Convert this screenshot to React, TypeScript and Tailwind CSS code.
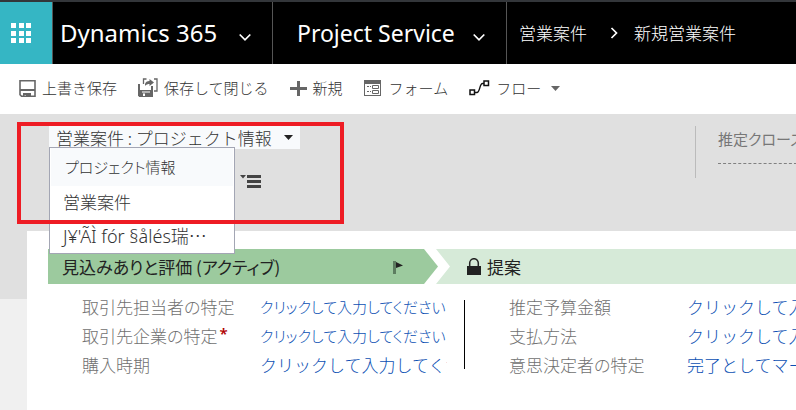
import type { ReactNode } from "react";

const cjk = "font-['Noto_Sans','Noto_Sans_CJK_JP',sans-serif]";
const jp = "font-['Noto_Sans_CJK_JP',sans-serif]";
const proportional = "[font-feature-settings:'palt']";

function Chevron({ right = false }: { right?: boolean }) {
  return (
    <svg width="12" height="12" viewBox="0 0 12 12" fill="none" stroke="white" strokeWidth="1.700" aria-hidden="true">
      <path d={right ? "M3.5 1 8.5 6l-5 5" : "M.7 3.5 6 8.800l5.3-5.3"} />
    </svg>
  );
}

function WaffleIcon() {
  return (
    <svg width="20" height="20" viewBox="0 0 20 20" fill="white" aria-hidden="true">
      {[0, 8, 15].map((y) =>
        [0, 8, 15].map((x) => <rect key={`${x}-${y}`} x={x} y={y} width="5" height="5" />),
      )}
    </svg>
  );
}

function SaveIcon() {
  return (
    <svg width="17" height="17" viewBox="0 0 17 17" fill="none" aria-hidden="true">
      <path d="M1 .7h15v15.6H2.600L1 14.700z" stroke="#666" strokeWidth="1.600" />
      <path d="M1 9h15v2H1zM4 13h8v4H7v-2H5.500v2H4z" fill="#666" />
    </svg>
  );
}

function SaveCloseIcon() {
  return (
    <svg width="20" height="20" viewBox="0 0 20 20" fill="none" aria-hidden="true">
      <path d="M5.500 6V1h3M16 1h3v12h-3" stroke="#666" strokeWidth="1.3" />
      <path d="M0 6h2v6h11V8h2v11H1.500L0 17.500z" fill="#666" />
      <path d="M0 12h15v7H1.500L0 17.500z" fill="#666" />
      <path d="M5 15.500h2V18H5zM4 13.500h8v1H4z" fill="white" />
      <path d="M7 6c.5-2 2-3 4.500-3V1l4.500 3.500L11.500 8V6C10 6 8 6.500 7 8z" fill="#666" />
    </svg>
  );
}

function PlusIcon() {
  return (
    <svg width="17" height="17" viewBox="0 0 17 17" fill="#666" aria-hidden="true">
      <path d="M7 1h3v6h7v3h-7v6H7v-6H0V7h7z" />
    </svg>
  );
}

function FormIcon() {
  return (
    <svg width="19" height="16" viewBox="0 0 19 16" aria-hidden="true">
      <path d="M0 0h17v16H0zM1 4v11h15V4z" fill="#666" fillRule="evenodd" />
      <path d="M3 6h2v1H3zM3 11h2v1H3zM6 6h1v1H6zM6 11h1v1H6z" fill="#666" />
      <path d="M8.500 5.500h6v3h-6zM8.500 10.500h6v3h-6z" fill="none" stroke="#666" />
    </svg>
  );
}

function FlowIcon() {
  return (
    <svg width="21" height="16" viewBox="0 0 21 16" fill="none" stroke="#111" aria-hidden="true">
      <rect x="1" y="10" width="4.500" height="4.500" strokeWidth="1.500" />
      <rect x="15" y="1" width="4.500" height="4.500" strokeWidth="1.500" />
      <path d="M6 12.500h2c3 0 2.500-9 5.500-9H15" strokeWidth="1.300" />
    </svg>
  );
}

function Caret({ className }: { className: string }) {
  return (
    <svg width="9" height="5" viewBox="0 0 9 5" className={className} aria-hidden="true">
      <path d="M0 0h9L4.500 5z" fill="currentColor" />
    </svg>
  );
}

function ToolButton({ icon, children }: { icon: ReactNode; children: ReactNode }) {
  return (
    <button type="button" className="flex shrink-0 items-center gap-[6px]">
      {icon}
      <span>{children}</span>
    </button>
  );
}

type Field = { label: string; value: string; narrow?: boolean; required?: boolean };

const qualify: Field[] = [
  { label: "取引先担当者の特定", value: "クリックして入力してください", narrow: true },
  { label: "取引先企業の特定", value: "クリックして入力してください", narrow: true, required: true },
  { label: "購入時期", value: "クリックして入力してください" },
];

const propose: Field[] = [
  { label: "推定予算金額", value: "クリックして入力してください" },
  { label: "支払方法", value: "クリックして入力してください" },
  { label: "意思決定者の特定", value: "完了としてマーク" },
];

function FieldList({ fields }: { fields: Field[] }) {
  return (
    <dl className="grid shrink-0 grid-cols-[178px_187px] auto-rows-[29px] items-center whitespace-nowrap text-[17px] leading-[29px]">
      {fields.map((f) => (
        <div key={f.label} className="contents">
          <dt className={`flex text-[#707070] ${proportional}`}>
            {f.label}
            {f.required && <span className="pl-[2px] font-['Noto_Sans',sans-serif] text-[15px] leading-6 font-semibold text-[#b00000]">*</span>}
          </dt>
          <dd className="overflow-hidden text-[#0b4fb3]">
            <button
              type="button"
              className={f.narrow ? `block text-[15px] ${proportional}` : "block"}
            >
              {f.value}
            </button>
          </dd>
        </div>
      ))}
    </dl>
  );
}

export default function App() {
  return (
    <div className={`flex min-h-screen flex-col overflow-hidden bg-white font-light ${jp}`}>
      <header className="flex h-16 items-stretch whitespace-nowrap border-t-2 border-[#33363a] bg-black text-white">
        <button type="button" aria-label="アプリ" className="flex w-[53px] shrink-0 items-center border-r border-[#555] bg-[#35b6c4] pl-[11px]">
          <WaffleIcon />
        </button>
        <button type="button" className="flex w-[220px] shrink-0 items-center justify-between border-r border-[#555] pr-[21px] pl-[7px] font-['Noto_Sans',sans-serif] text-2xl font-normal">
          Dynamics 365
          <span className="pt-2"><Chevron /></span>
        </button>
        <button type="button" className="flex w-[234px] shrink-0 items-center justify-between border-r border-[#555] pr-[21px] pl-6 font-['Noto_Sans',sans-serif] text-[23px] font-normal">
          Project Service
          <span className="pt-2"><Chevron /></span>
        </button>
        <nav aria-label="階層" className="flex items-center pl-3 text-[17px]">
          <a href="#opportunities" className="pr-[21px]">営業案件</a>
          <Chevron right />
          <a href="#new" className="pl-[14px]">新規営業案件</a>
        </nav>
      </header>

      <div role="toolbar" aria-label="コマンド" className="flex h-[50px] items-center gap-[21px] whitespace-nowrap pb-[2px] pl-[19px] text-[15px] text-[#333]">
        <ToolButton icon={<SaveIcon />}>上書き保存</ToolButton>
        <ToolButton icon={<SaveCloseIcon />}>保存して閉じる</ToolButton>
        <ToolButton icon={<PlusIcon />}>新規</ToolButton>
        <ToolButton icon={<FormIcon />}>フォーム</ToolButton>
        <button type="button" className="flex shrink-0 items-center gap-[6px]">
          <FlowIcon />
          <span>フロー</span>
          <Caret className="ml-1 text-[#666]" />
        </button>
      </div>

      <section className="relative flex h-[117px] justify-between bg-[#e0e0e0] pt-3">
        <div className="pl-[49px]">
          <button type="button" aria-haspopup="menu" aria-expanded="true" className="flex h-[23px] w-[251px] items-center justify-between whitespace-nowrap bg-[#f8fafc] px-[7px] text-[17px] text-[#333]">
            営業案件 : プロジェクト情報
            <Caret className="text-[#222]" />
          </button>
          <button type="button" aria-label="レコードの一覧" className="mt-[25px] ml-[191px] block">
            <svg width="21" height="14" viewBox="0 0 21 14" fill="#444" aria-hidden="true">
              <path d="M0 1h6L3 4.500zM7 1h14v3H7zM7 6h14v3H7zM7 11h14v3H7z" />
            </svg>
          </button>
        </div>

        <ul role="menu" className="absolute top-[33px] left-[49px] z-10 w-[186px] border border-[#a3a6b4] bg-white px-px pb-px text-[17px] text-[#333]">
          <li role="none" className="h-[38px] bg-[#f8fafc]">
            <button role="menuitem" type="button" className={`h-full w-full pl-[14px] text-left text-[15px] ${proportional}`}>プロジェクト情報</button>
          </li>
          <li role="none" className="h-8">
            <button role="menuitem" type="button" className="h-full w-full pl-[12px] text-left">営業案件</button>
          </li>
          <li role="none" className="h-[34px]">
            <button role="menuitem" type="button" className={`h-full w-full whitespace-nowrap pl-[12px] text-left text-lg ${cjk}`}>
              J¥'ÃÌ fór §ålés瑞<span className={jp}>…</span>
            </button>
          </li>
        </ul>

        <div className="pointer-events-none absolute top-2 left-[17px] z-20 h-[102px] w-[327px] border-4 border-[#ee1c24]" />

        <div className="h-[52px] w-[101px] overflow-hidden whitespace-nowrap border-l border-[#bbb] pl-[22px] text-[#777]">
          <label htmlFor="close-date" className={`block text-[15px] leading-[26px] font-normal ${proportional}`}>推定クローズ日</label>
          <input id="close-date" className="block h-3 w-[160px] border-b border-dashed border-[#808080] bg-transparent outline-none" />
        </div>
      </section>

      <div className="flex flex-1">
        <div className="w-[27px] shrink-0 bg-[#f0f0f0]">
          <div className="h-[68px] bg-[#e0e0e0]" />
        </div>
        <main className="min-w-0 flex-1 pt-[18px] pl-[21px]">
          <div className={`flex h-[35px] whitespace-nowrap text-[17px] text-[#222] ${proportional}`}>
            <button type="button" className="flex w-[390px] shrink-0 items-center justify-between bg-[#9cca9e] pr-[34px] pl-[14px] font-normal [clip-path:polygon(0_0,376px_0,100%_50%,376px_100%,0_100%)]">
              見込みありと評価 (アクティブ)
              <svg width="11" height="14" viewBox="0 0 11 14" aria-hidden="true">
                <path d="M0 1h3v13H0z" fill="#5d7d60" />
                <path d="M3 2l7 3.500L3 8z" fill="#222" />
              </svg>
            </button>
            <button type="button" className="-ml-[2px] flex flex-1 items-center gap-[6px] bg-[#d6ead8] pl-[31px] font-normal [clip-path:polygon(0_0,100%_0,100%_100%,0_100%,14px_50%)]">
              <svg width="14" height="18" viewBox="0 0 14 18" aria-hidden="true">
                <path d="M2.700 9V5a4.300 4.300 0 0 1 8.600 0v4" fill="none" stroke="#222" strokeWidth="1.500" />
                <path d="M0 8h14v9H0z" fill="#222" />
              </svg>
              提案
            </button>
          </div>
          <div className="flex overflow-hidden pt-2 pl-[34px]">
            <FieldList fields={qualify} />
            <div className="mt-2 mr-11 ml-[17px] h-[69px] w-px shrink-0 bg-black" />
            <FieldList fields={propose} />
          </div>
        </main>
      </div>
    </div>
  );
}
